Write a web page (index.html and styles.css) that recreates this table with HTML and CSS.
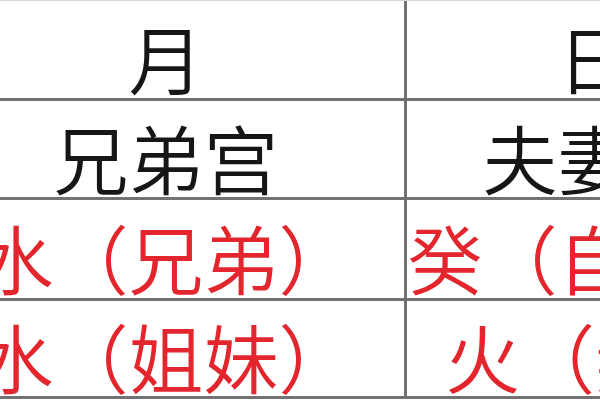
FILE: index.html
```html
<!DOCTYPE html>
<html lang="zh">
<head>
<meta charset="utf-8">
<title>宫位表</title>
<link rel="stylesheet" href="styles.css">
</head>
<body>
<div class="sheet">
  <div class="cell col1 r1">月</div>
  <div class="cell col2 r1">日</div>
  <div class="cell col1 r2">兄弟宫</div>
  <div class="cell col2 r2">夫妻宫</div>
  <div class="cell col1 r3 red">水（兄弟）</div>
  <div class="cell col2 r3 red">癸（自己）</div>
  <div class="cell col1 r4 red">水（姐妹）</div>
  <div class="cell col2 r4 red">火（妻）</div>
</div>
</body>
</html>
```
FILE: styles.css
```css
html, body {
  margin: 0;
  padding: 0;
  background: #ffffff;
}
body {
  width: 600px;
  height: 400px;
  overflow: hidden;
}
.sheet {
  display: grid;
  grid-template-columns: 479px 376px;
  grid-template-rows: 100px 99px 101px 98px;
  margin-left: -72px;
  border-top: 1px solid #d8d8d8;
  width: 855px;
}
.cell {
  box-sizing: border-box;
  border-bottom: 3px solid #727272;
  display: flex;
  align-items: center;
  justify-content: center;
  padding-top: 14px;
  font-family: "Noto Sans CJK SC", "Noto Sans CJK JP", sans-serif;
  font-weight: 350;
  font-size: 75px;
  line-height: 1;
  color: #161616;
  white-space: nowrap;
}
.col1 {
  border-right: 3px solid #727272;
}
.red {
  color: #e3252d;
}
```
